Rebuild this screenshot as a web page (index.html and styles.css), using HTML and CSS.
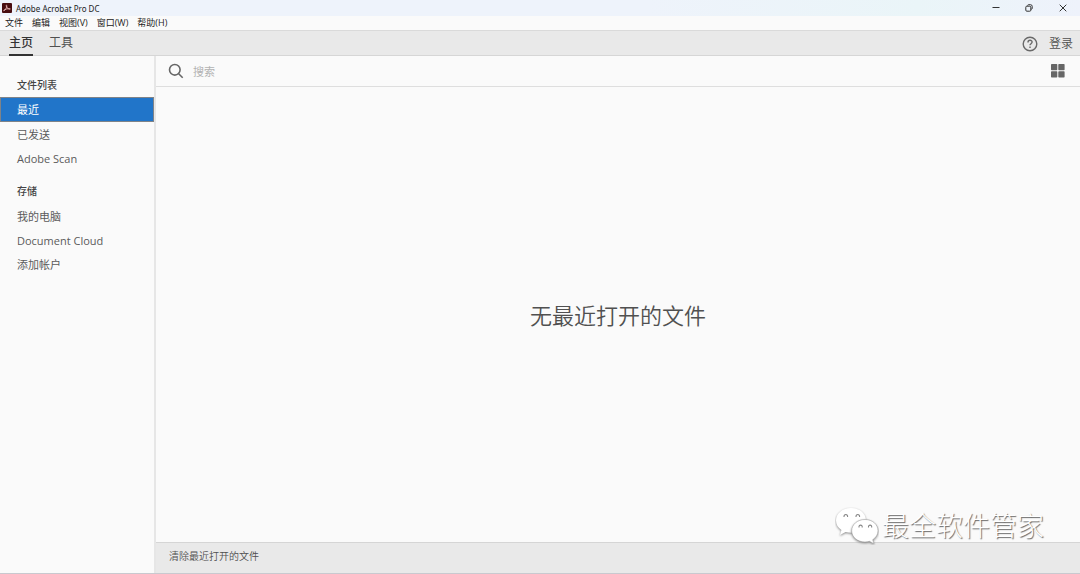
FILE: index.html
```html
<!DOCTYPE html>
<html lang="zh-CN">
<head>
<meta charset="utf-8">
<meta name="viewport" content="width=device-width, initial-scale=1">
<title>Adobe Acrobat Pro DC</title>
<link rel="stylesheet" href="styles.css">
</head>
<body>
<div class="window">
  <header class="titlebar">
    <svg class="app-icon" viewBox="0 0 20 20" aria-hidden="true"><rect width="20" height="20" rx="2" fill="#470d10"/><path d="M4 15.500c2.500-2 5-5.500 5.700-9 .3-2.500-1.300-3-1.300-1 .2 3 3.900 6.900 7.200 7.200 1.700 0 1-1.900-1-1.700-3.600.2-7.300 1.300-10.200 3-1.300 1-1 2-.4 1.500z" fill="none" stroke="#e8b4b4" stroke-width="1.800"/></svg>
    <span class="app-name">Adobe Acrobat Pro DC</span>
    <div class="window-controls">
      <button class="window-button" type="button" aria-label="最小化"><svg viewBox="0 0 8 8"><path d="M.5 3.500h7"/></svg></button>
      <button class="window-button" type="button" aria-label="还原"><svg viewBox="0 0 8 8"><rect x=".8" y="2.200" width="5" height="5" rx="1"/><path d="M2.500 1.500q.2-.8 1.200-.8h1.800q1.700 0 1.700 1.700v1.800q0 1-.9 1.200"/></svg></button>
      <button class="window-button" type="button" aria-label="关闭"><svg viewBox="0 0 8 8"><path d="M.7.700l6.600 6.600M7.300.700L.7 7.300"/></svg></button>
    </div>
  </header>
  <nav class="menubar" aria-label="菜单">
    <button class="menu-item" type="button">文件</button>
    <button class="menu-item" type="button">编辑</button>
    <button class="menu-item" type="button">视图(V)</button>
    <button class="menu-item" type="button">窗口(W)</button>
    <button class="menu-item" type="button">帮助(H)</button>
  </nav>
  <div class="tabbar">
    <button class="tab tab-active" type="button">主页</button>
    <button class="tab" type="button">工具</button>
    <div class="account">
      <button class="help" type="button" aria-label="帮助"><svg viewBox="0 0 16 16"><circle cx="8" cy="8" r="6.800"/><path d="M6 6.400c0-2.900 4.100-2.700 4.100-.3 0 1.600-2.100 1.600-2.100 3.200M8 10.500v1.400"/></svg></button>
      <button class="sign-in" type="button">登录</button>
    </div>
  </div>
  <div class="workspace">
    <aside class="sidebar">
      <h2 class="group-title">文件列表</h2>
      <a class="side-link side-link-active" href="#recent">最近</a>
      <a class="side-link" href="#sent">已发送</a>
      <a class="side-link" href="#scan">Adobe Scan</a>
      <h2 class="group-title group-title-next">存储</h2>
      <a class="side-link" href="#computer">我的电脑</a>
      <a class="side-link" href="#cloud">Document Cloud</a>
      <a class="side-link" href="#account">添加帐户</a>
    </aside>
    <main class="content">
      <div class="searchbar">
        <label class="search-label" for="search" aria-label="搜索"><svg class="search-icon" viewBox="0 0 16 16"><circle cx="6.800" cy="6.800" r="5.300"/><path d="M10.700 10.700l4 4"/></svg></label>
        <input class="search-input" id="search" type="text" placeholder="搜索">
        <button class="grid-button" type="button" aria-label="缩略图视图"><svg viewBox="0 0 14 14"><rect x="0" y="0" width="6.300" height="6.300" rx=".7"/><rect x="7.300" y="0" width="6.300" height="6.300" rx=".7"/><rect x="0" y="7.200" width="6.300" height="6.300" rx=".7"/><rect x="7.300" y="7.200" width="6.300" height="6.300" rx=".7"/></svg></button>
      </div>
      <div class="empty"><p class="empty-text">无最近打开的文件</p></div>
      <footer class="footer"><button class="clear" type="button">清除最近打开的文件</button></footer>
    </main>
  </div>
  <div class="watermark">
    <svg class="watermark-icon" viewBox="0 0 44 38" aria-hidden="true"><g fill="#fff"><path class="bubble-back" d="M16 1C7.500 1 1 6.500 1 13.500c0 4 2 7.200 5.400 9.500L5 28l5.600-3c2 .6 3.600.8 5.400.8 8.500 0 15-5.300 15-12.300S24.500 1 16 1z"/><path class="bubble-front" d="M30 12.500c-7.500 0-13.300 5-13.300 11.300S22.500 35 30 35c1.600 0 3-.2 4.400-.7l4.600 2.400-1.300-4c3.300-2.100 5.300-5.300 5.300-8.900 0-6.300-5.500-11.300-13-11.300z"/></g><path d="M9 10c-.4-3.400 4-3.400 3.600 0M21 10c-.4-3.400 4-3.400 3.600 0M24 20.500c-.4-3.200 3.600-3.200 3.200 0M33.500 20.500c-.4-3.200 3.600-3.200 3.200 0" fill="none" stroke="#858585" stroke-width="1.100"/></svg>
    <span class="watermark-text">最全软件管家</span>
  </div>
</div>
</body>
</html>
```
FILE: styles.css
```css
* {
  box-sizing: border-box;
}

body {
  margin: 0;
  font-family: "Open Sans", "Noto Sans CJK SC", sans-serif;
  color: #505050;
  background: #fafafa;
}

button {
  padding: 0;
  border: 0;
  background: none;
  color: inherit;
  font: inherit;
}

svg {
  display: block;
}

.window {
  position: relative;
  display: flex;
  flex-direction: column;
  height: 100vh;
  border-bottom: 1px solid #c9c9cf;
}

.titlebar {
  display: flex;
  align-items: center;
  gap: 4px;
  height: 16px;
  padding-left: 2px;
  background: linear-gradient(90deg, #eef3fb 0%, #eef3fb 60%, #eaf5f8 85%, #eef2fb 100%);
  color: #222;
  font-family: "Noto Sans", sans-serif;
  font-size: 8px;
}

.app-icon {
  width: 10px;
  height: 10px;
}

.window-controls {
  display: flex;
  margin-left: auto;
}

.window-button {
  display: grid;
  place-items: center;
  width: 33px;
  height: 16px;
}

.window-button:last-child {
  width: 35px;
}

.window-button svg {
  width: 8px;
  height: 8px;
  fill: none;
  stroke: #333;
}

.menubar {
  display: flex;
  align-items: center;
  gap: 9px;
  height: 14px;
  padding-left: 5px;
  color: #222;
  font-size: 9px;
  line-height: 14px;
}

.tabbar {
  display: flex;
  gap: 16px;
  height: 26px;
  padding: 0 7px 0 9px;
  border-top: 1px solid #dadada;
  border-bottom: 1px solid #d6d6d6;
  background: #e9e9e9;
  font-size: 12px;
  line-height: 24px;
}

.tab {
  height: 25px;
  border-bottom: 2px solid transparent;
}

.tab-active {
  border-color: #333;
  color: #333;
  font-weight: 500;
}

.account {
  display: flex;
  align-items: center;
  gap: 11px;
  margin-left: auto;
  padding-top: 1px;
}

.help svg {
  width: 16px;
  height: 16px;
  fill: none;
  stroke: #696969;
  stroke-width: 1.4;
}

.sign-in {
  font-weight: 350;
}

.workspace {
  display: flex;
  flex: 1;
  min-height: 0;
}

.sidebar {
  width: 156px;
  padding-top: 20px;
  border-right: 2px solid #e6e6e6;
}

.group-title {
  margin: 0;
  padding: 0 17px;
  height: 21px;
  color: #444;
  font-size: 10px;
  font-weight: 500;
  line-height: 18px;
}

.group-title-next {
  margin-top: 12px;
  height: 22px;
}

.side-link {
  display: block;
  height: 24px;
  padding: 0 16px;
  border: 1px solid transparent;
  color: #5a5a5a;
  font-size: 11px;
  line-height: 24px;
  text-decoration: none;
}

.side-link-active {
  height: 25px;
  border-color: #7f8388;
  background: #2175c9;
  color: #fff;
}

.content {
  display: flex;
  flex: 1;
  flex-direction: column;
}

.searchbar {
  display: flex;
  align-items: center;
  height: 31px;
  padding: 0 15px 0 12px;
  border-bottom: 1px solid #dedede;
}

.search-icon {
  width: 16px;
  height: 16px;
  fill: none;
  stroke: #666;
  stroke-width: 1.6;
}

.search-input {
  flex: 1;
  min-width: 0;
  margin-left: 9px;
  padding: 0;
  border: 0;
  outline: 0;
  background: none;
  color: #505050;
  font: inherit;
  font-size: 11px;
}

.search-input::placeholder {
  color: #b2b2b2;
}

.grid-button svg {
  width: 14px;
  height: 14px;
  fill: #666;
}

.empty {
  display: grid;
  flex: 1;
  place-items: center;
}

.empty-text {
  margin: 0;
  font-size: 22px;
  font-weight: 350;
  line-height: 32px;
}

.footer {
  height: 31px;
  padding-left: 13px;
  border-top: 1px solid #d5d5d5;
  background: #e9e9e9;
  font-size: 10px;
  font-weight: 350;
  line-height: 26px;
}

.watermark {
  position: absolute;
  right: 36px;
  bottom: 28px;
  display: flex;
  align-items: center;
  gap: 3px;
}

.watermark-icon {
  width: 44px;
  height: 38px;
}

.bubble-back,
.bubble-front {
  filter: drop-shadow(0 1px 1px #888);
}

.bubble-front {
  stroke: #999;
  stroke-width: 0.5;
}

.watermark-text {
  color: #fff;
  font-size: 27px;
  font-weight: 300;
  line-height: 38px;
  text-shadow: 1px 1px 1px #666;
}
```
